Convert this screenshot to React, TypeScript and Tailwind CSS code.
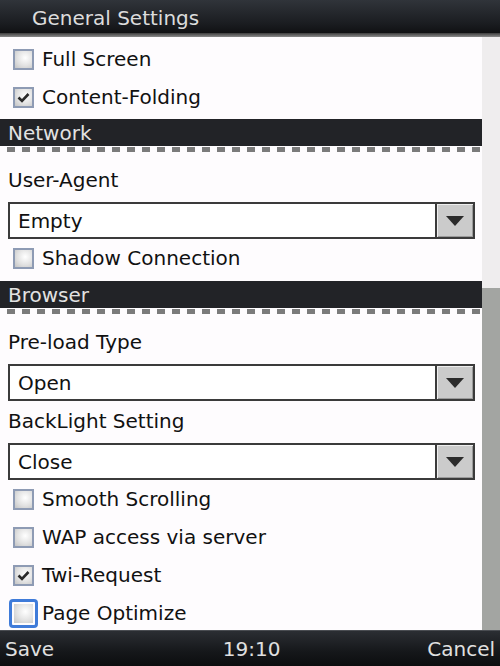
import React from "react";

type Row =
  | { kind: "check"; label: string; checked?: boolean; focused?: boolean }
  | { kind: "header"; label: string; gap: string }
  | { kind: "label"; label: string; first?: boolean }
  | { kind: "select"; value: string };

const rows: Row[] = [
  { kind: "check", label: "Full Screen" },
  { kind: "check", label: "Content-Folding", checked: true },
  { kind: "header", label: "Network", gap: "mt-[3px]" },
  { kind: "label", label: "User-Agent", first: true },
  { kind: "select", value: "Empty" },
  { kind: "check", label: "Shadow Connection" },
  { kind: "header", label: "Browser", gap: "mt-[4px]" },
  { kind: "label", label: "Pre-load Type", first: true },
  { kind: "select", value: "Open" },
  { kind: "label", label: "BackLight Setting" },
  { kind: "select", value: "Close" },
  { kind: "check", label: "Smooth Scrolling" },
  { kind: "check", label: "WAP access via server" },
  { kind: "check", label: "Twi-Request", checked: true },
  { kind: "check", label: "Page Optimize", focused: true },
];

function Checkbox({ checked, focused }: { checked?: boolean; focused?: boolean }) {
  if (focused) {
    return (
      <div className="w-[29px] h-[29px] -mx-[4px] rounded-[4px] border-[3px] border-[#3f7bd9] flex items-center justify-center">
        <div className="w-[19px] h-[19px] bg-[radial-gradient(circle_at_60%_40%,#ffffff_0%,#e2e2e2_55%,#c4c4c4_100%)]" />
      </div>
    );
  }
  return (
    <div className="w-[21px] h-[21px] border-2 border-[#8e9bb4] bg-[radial-gradient(circle_at_60%_40%,#ffffff_0%,#e2e2e2_55%,#c4c4c4_100%)] flex items-center justify-center">
      {checked && (
        <svg width="13" height="11" viewBox="0 0 13 11">
          <path d="M1.5 5.5 L5 9 L11.5 2" fill="none" stroke="#2a2a2a" strokeWidth="2.6" />
        </svg>
      )}
    </div>
  );
}

function SectionHeader({ label, gap }: { label: string; gap: string }) {
  return (
    <div className={gap}>
      <div className="h-[27px] bg-[#222327] text-[#e2e2e2] pl-[8px] flex items-center leading-none">
        {label}
      </div>
      <div className="h-[6px] pl-[7px] pt-[1px]">
        <div className="h-[5px] bg-[repeating-linear-gradient(90deg,#7b7b7b_0px,#7b7b7b_8px,transparent_8px,transparent_15px)]" />
      </div>
    </div>
  );
}

function Select({ value }: { value: string }) {
  return (
    <div className="ml-[8px] mr-[7px] h-[37px] border-2 border-[#3b3b3b] bg-white flex mt-[3px]">
      <div className="flex-1 flex items-center pl-[8px] leading-none">{value}</div>
      <div className="w-[38px] border-l-2 border-[#3b3b3b] bg-[#cbcbcb] flex items-center justify-center shadow-[inset_1px_1px_0_#eeeeee,inset_-1px_-1px_0_#9a9a9a]">
        <svg width="18" height="10" viewBox="0 0 18 10">
          <path d="M0 0 H18 L9 10 Z" fill="#2b2b2b" />
        </svg>
      </div>
    </div>
  );
}

export default function App() {
  return (
    <div
      className="w-[500px] h-[666px] flex flex-col bg-[#fefcfe] text-[#111111] text-[20px] overflow-hidden"
      style={{ fontFamily: '"DejaVu Sans", sans-serif' }}
    >
      {/* title */}
      <div className="h-[33px] shrink-0 bg-[linear-gradient(#30343a,#1b1d21_70%,#101113)] text-[#dcdcdc] pl-[32px] pt-[2px] flex items-center leading-none">
        General Settings
      </div>
      <div className="h-[4px] shrink-0 bg-[linear-gradient(#3c3c3c,#8a8a8a)]" />

      <div className="flex flex-1 min-h-0">
        <div className="flex-1 pt-[3px] overflow-hidden">
          {rows.map((row, i) => {
            if (row.kind === "header") return <SectionHeader key={i} label={row.label} gap={row.gap} />;
            if (row.kind === "select") return <Select key={i} value={row.value} />;
            if (row.kind === "label")
              return (
                <div
                  key={i}
                  className={`h-[38px] pl-[8px] flex items-center leading-none ${row.first ? "mt-[9px]" : "mt-[1px]"}`}
                >
                  {row.label}
                </div>
              );
            return (
              <div key={i} className="h-[38px] pl-[13px] flex items-center gap-[8px] leading-none">
                <Checkbox checked={row.checked} focused={row.focused} />
                <span>{row.label}</span>
              </div>
            );
          })}
        </div>
        {/* scrollbar */}
        <div className="w-[18px] flex flex-col">
          <div className="h-[251px] bg-[#efedee]" />
          <div className="flex-1 bg-[#a3a5a2]" />
        </div>
      </div>

      {/* softkeys */}
      <div className="h-[36px] shrink-0 border-t border-[#4a4d52] bg-[linear-gradient(#2b2e33,#15171a_60%,#0c0d0f)] text-[#e0e0e0] flex items-center justify-between px-[5px] leading-none">
        <span>Save</span>
        <span className="pl-[22px]">19:10</span>
        <span>Cancel</span>
      </div>
    </div>
  );
}
